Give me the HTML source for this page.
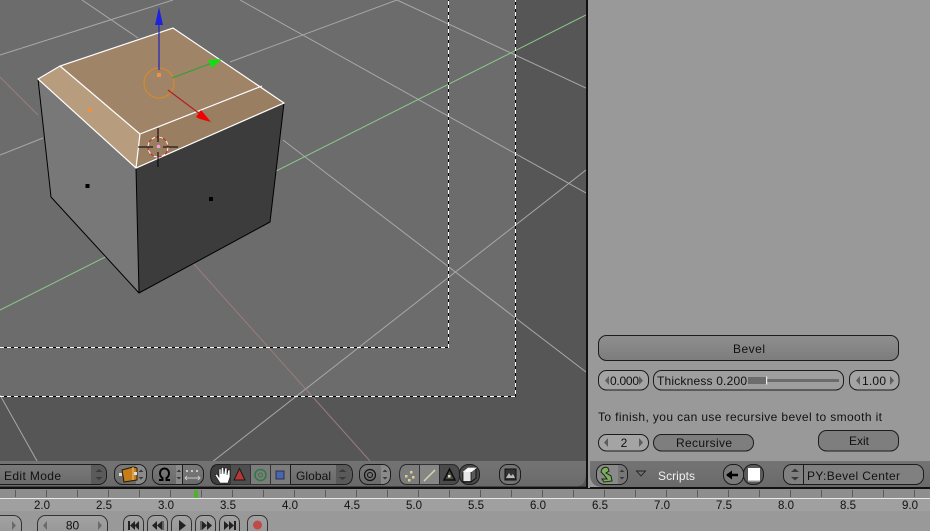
<!DOCTYPE html>
<html><head><meta charset="utf-8"><style>
html,body{margin:0;padding:0;background:#999;width:930px;height:531px;overflow:hidden}
svg{display:block;font-family:"Liberation Sans",sans-serif;font-size:11.5px;filter:blur(.35px)}
</style></head><body>
<svg width="930" height="531" viewBox="0 0 930 531" xmlns="http://www.w3.org/2000/svg">
<defs>
<linearGradient id="hd" x1="0" y1="0" x2="0" y2="1"><stop offset="0" stop-color="#747474"/><stop offset="1" stop-color="#6a6a6a"/></linearGradient>
<linearGradient id="bv" x1="0" y1="0" x2="0" y2="1"><stop offset="0" stop-color="#8f8f8f"/><stop offset="1" stop-color="#7c7c7c"/></linearGradient>
<linearGradient id="ds" x1="0" y1="0" x2="0" y2="1"><stop offset="0" stop-color="#7a7a7a"/><stop offset="1" stop-color="#6a6a6a"/></linearGradient>
<linearGradient id="lt" x1="0" y1="0" x2="0" y2="1"><stop offset="0" stop-color="#a2a2a2"/><stop offset="1" stop-color="#949494"/></linearGradient>
<clipPath id="vp"><rect x="0" y="0" width="586" height="461"/></clipPath>
</defs>
<rect width="930" height="531" fill="#999"/>
<!-- viewport -->
<rect width="587" height="488" fill="#565656"/>
<rect width="515" height="396" fill="#6c6c6c"/>
<g clip-path="url(#vp)" fill="none" stroke-width="1">
<path d="M0 55L173 0M82 0L138 38M240 0L586 193M230 62L397 0M397 0L586 88M283 140L586 372M586 170L175 491M0 155L43 138M0 395L37 461" stroke="#a8a8a8"/>
<path d="M0 77L38 115M193 263L370 461" stroke="#9a7c7c"/>
<path d="M0 310L586 15" stroke="#8cc88c"/>
</g>
<!-- camera frames -->
<g fill="none" stroke-width="1">
<path d="M0 347.500H448.500V0M0 396.500H515.500V0" stroke="#000"/>
<path d="M0 347.500H448.500V0M0 396.500H515.500V0" stroke="#fff" stroke-dasharray="4 3"/>
</g>
<!-- cube -->
<polygon points="38,79 136,168 139,293 51,197" fill="#787878"/>
<polygon points="136,168 284,103 270,222 139,293" fill="#3c3c3c"/>
<polygon points="38,79 60,66 140,134 136,168" fill="#b89c7e"/>
<polygon points="60,66 173,28 262,87 140,134" fill="#a08468"/>
<polygon points="140,134 262,87 284,103 136,168" fill="#9a7e62"/>
<path d="M38 79L51 197L139 293L270 222L284 103M136 168L139 293" fill="none" stroke="#000" stroke-width="1"/>
<path d="M38 79L60 66L173 28L284 103L136 168Z M60 66L140 134L136 168M140 134L262 86" fill="none" stroke="#fff" stroke-width="1.200"/>
<rect x="85.500" y="184" width="4" height="4" fill="#000"/>
<rect x="209" y="197" width="4" height="4" fill="#000"/>
<rect x="88" y="108" width="4" height="4" fill="#f09040"/>
<rect x="157" y="73" width="4" height="4" fill="#f09040"/>
<!-- gizmo -->
<circle cx="159" cy="83" r="15" fill="none" stroke="#e08a20" stroke-width="1"/>
<path d="M159 70V22" stroke="#2222c0" stroke-width="1.200"/>
<polygon points="159,7 155,25 163,25" fill="#2020e0"/>
<path d="M172 78L212 63" stroke="#30a030" stroke-width="1.200"/>
<polygon points="222,59 208,60 212,68" fill="#10e010"/>
<path d="M168 90L200 114" stroke="#b02020" stroke-width="1.200"/>
<polygon points="211,122 201,110 196,117 200,119" fill="#f00000"/>
<!-- 3d cursor -->
<circle cx="158" cy="147" r="10" fill="none" stroke="#d02020" stroke-width="1"/>
<circle cx="158" cy="147" r="10" fill="none" stroke="#fff" stroke-width="1" stroke-dasharray="4 4"/>
<path d="M158 128V142M158 152V167M138 147H153M163 147H178" stroke="#000" stroke-width="1"/>
<circle cx="158.500" cy="146.500" r="1.800" fill="#e8a0d8"/>

<!-- right panel -->
<rect x="586" y="0" width="344" height="488" fill="#999"/>
<rect x="586" y="0" width="2" height="488" fill="#111"/>

<!-- viewport header -->
<path d="M0 461H586V474Q586 487 573 487H0Z" fill="url(#hd)"/>
<path d="M0 487H586" stroke="#222" stroke-width="1"/>
<rect x="0" y="487" width="930" height="2" fill="#111"/>
<!-- right header -->
<path d="M590 461H930V487H603Q590 487 590 474Z" fill="url(#hd)"/>
<rect x="588" y="461" width="2" height="27" fill="#999"/>

<!-- ruler -->
<rect x="0" y="489" width="930" height="9" fill="#8e8e8e"/>
<rect x="0" y="498" width="930" height="1" fill="#e8e8e8"/>
<rect x="0" y="499" width="930" height="12" fill="#a0a0a0"/>
<path d="M15.500 490V497M46.500 490V497M77.500 490V497M108.500 490V497M139.500 490V497M170.500 490V497M201.500 490V497M232.500 490V497M263.500 490V497M294.500 490V497M325.500 490V497M356.500 490V497M387.500 490V497M418.500 490V497M449.500 490V497M480.500 490V497M511.500 490V497M542.500 490V497M573.500 490V497M604.500 490V497M635.500 490V497M666.500 490V497M697.500 490V497M728.500 490V497M759.500 490V497M790.500 490V497M821.500 490V497M852.500 490V497M883.500 490V497M914.500 490V497" stroke="#5a5a5a" stroke-width="1"/>
<rect x="194" y="490" width="4" height="8" fill="#52b030"/>
<g fill="#111" text-anchor="middle" font-size="11.500">
<text x="42" y="509">2.0</text><text x="104" y="509">2.5</text><text x="166" y="509">3.0</text><text x="228" y="509">3.5</text><text x="290" y="509">4.0</text><text x="352" y="509">4.5</text><text x="414" y="509">5.0</text><text x="476" y="509">5.5</text><text x="538" y="509">6.0</text><text x="600" y="509">6.5</text><text x="662" y="509">7.0</text><text x="724" y="509">7.5</text><text x="786" y="509">8.0</text><text x="848" y="509">8.5</text><text x="910" y="509">9.0</text>
</g>

<!-- header widgets -->
<g stroke="#1c1c1c" stroke-width="1">
<rect x="-10.500" y="464.500" width="117" height="20" rx="8" fill="url(#ds)"/>
<path d="M91 465H98Q106 465 106 474.500Q106 484 98 484H91Z" fill="#5a5a5a" stroke="none"/>
<rect x="114.500" y="464.500" width="32" height="20" rx="8" fill="url(#ds)"/>
<path d="M136 465H138Q146 465 146 474.500Q146 484 138 484H136Z" fill="#8a8a8a" stroke="none"/>
<rect x="152.500" y="464.500" width="51" height="20" rx="8" fill="url(#ds)"/>
<rect x="176" y="465" width="6" height="19" fill="#8a8a8a" stroke="none"/>
<path d="M182.500 465V484" fill="none"/>
<path d="M218 464.500H230.500V484.500H218Q210.500 484.500 210.500 474.500Q210.500 464.500 218 464.500Z" fill="#3e3e3e"/>
<rect x="230.500" y="464.500" width="20" height="20" fill="#4e4e4e" stroke="#333"/>
<rect x="250.500" y="464.500" width="20" height="20" fill="#7c7c7c" stroke="#333"/>
<rect x="270.500" y="464.500" width="20" height="20" fill="#7c7c7c" stroke="#333"/>
<path d="M290.500 464.500H344Q352.500 464.500 352.500 474.500Q352.500 484.500 344 484.500H290.500Z" fill="url(#ds)"/>
<path d="M336 465H344Q352 465 352 474.500Q352 484 344 484H336Z" fill="#5a5a5a" stroke="none"/>
<rect x="359.500" y="464.500" width="31" height="20" rx="8" fill="url(#ds)"/>
<path d="M381 465H382Q390 465 390 474.500Q390 484 382 484H381Z" fill="#8a8a8a" stroke="none"/>
<path d="M407 464.500H419.500V484.500H407Q399.500 484.500 399.500 474.500Q399.500 464.500 407 464.500Z" fill="#7c7c7c" stroke="#2a2a2a"/>
<rect x="419.500" y="464.500" width="20" height="20" fill="#868686" stroke="#333"/>
<path d="M439.500 464.500H452Q459.500 464.500 459.500 474.500Q459.500 484.500 452 484.500H439.500Z" fill="#4a4a4a" stroke="#2a2a2a"/>
<rect x="459.500" y="464.500" width="20" height="20" rx="9" fill="#484848"/>
<rect x="499.500" y="464.500" width="21" height="20" rx="8" fill="#747474"/>
<!-- right -->
<rect x="596.500" y="464.500" width="31" height="20" rx="8" fill="#8a8a8a"/>
<path d="M618 465H619Q627 465 627 474.500Q627 484 619 484H618Z" fill="#777" stroke="none"/>
<rect x="723.500" y="464.500" width="20" height="20" rx="9" fill="#7a7a7a"/>
<rect x="743.500" y="464.500" width="20" height="20" rx="9" fill="#5a5a5a"/>
<rect x="783.500" y="464.500" width="140" height="20" rx="8" fill="#808080"/>
<path d="M803.500 465V484" fill="none"/>
</g>
<text x="4" y="480" fill="#111" font-size="12" textLength="57" lengthAdjust="spacing">Edit Mode</text>
<text x="296" y="480" fill="#111" font-size="12" textLength="35" lengthAdjust="spacing">Global</text>
<text x="658" y="480" fill="#f0f0f0" font-size="12" textLength="37" lengthAdjust="spacing">Scripts</text>
<text x="807" y="480" fill="#111" font-size="12" textLength="93" lengthAdjust="spacing">PY:Bevel Center</text>
<!-- stepper arrows -->
<g fill="#3a3a3a">
<path d="M95.500 472L99 469L102.500 472ZM95.500 477L99 480L102.500 477Z"/>
<path d="M338.500 472L342.500 469L346.500 472ZM338.500 477L342.500 480L346.500 477Z"/>
<path d="M138.500 472L141 469.500L143.500 472ZM138.500 477L141 479.500L143.500 477Z"/>
<path d="M176.500 472L179 469.500L181 472ZM176.500 477L179 479.500L181 477Z"/>
<path d="M382.500 472L385 469.500L387.500 472ZM382.500 477L385 479.500L387.500 477Z"/>
<path d="M619.500 472L622 469.500L624.500 472ZM619.500 477L622 479.500L624.500 477Z"/>
<path d="M791 472L795 468.500L799 472ZM791 477L795 480.500L799 477Z"/>
</g>
<!-- object icon -->
<path d="M122 470L133 467L137 468V480L124 482Z" fill="#c67c18" stroke="#221a08" stroke-width="1"/>
<path d="M133 467V480" stroke="#e8c890" stroke-width="1"/>
<rect x="119" y="473" width="3" height="3" fill="#ddd"/><rect x="134" y="472" width="3" height="3" fill="#ddd"/>
<!-- omega -->
<path d="M159 480H162.500V478C158.500 475.500 159.500 468.500 164.500 468.500C169.500 468.500 170.500 475.500 166.500 478V480H170" fill="none" stroke="#000" stroke-width="2"/>
<!-- snap -->
<g fill="#c8c8c8"><rect x="186" y="470" width="2" height="2"/><rect x="191" y="470" width="2" height="2"/><rect x="196" y="470" width="2" height="2"/></g>
<path d="M185 478H200M187 476L185 478L187 480M198 476L200 478L198 480" fill="none" stroke="#c8c8c8" stroke-width="1"/>
<!-- hand -->
<path d="M215 475L217 474L219 477V469H221V474L221.500 467.500H223.500L224 474L225 468H227L227 475L228 470H230V477L228 483H220Z" fill="#fff" stroke="#111" stroke-width=".6"/>
<polygon points="239.500,468.500 245,480 234,480" fill="#b83838" stroke="#1a1a1a"/>
<circle cx="260.500" cy="475" r="5.500" fill="none" stroke="#2f7a44" stroke-width="1.600"/><circle cx="260.500" cy="475" r="2" fill="none" stroke="#2f7a44"/>
<rect x="276" y="471" width="8" height="8" fill="#4a66b0" stroke="#223" stroke-width=".8"/>
<!-- pivot -->
<circle cx="370" cy="475" r="5.500" fill="none" stroke="#111" stroke-width="1.200"/><circle cx="370" cy="475" r="2.500" fill="none" stroke="#111"/>
<!-- selection modes -->
<g fill="#d8d090"><rect x="405" y="475" width="2.500" height="2.500"/><rect x="410" y="471" width="2.500" height="2.500"/><rect x="412" y="476" width="2.500" height="2.500"/><rect x="408" y="479" width="2.500" height="2.500"/></g>
<path d="M424 481L435 470" stroke="#d8d8a8" stroke-width="1.500"/>
<polygon points="449.500,469 455,480 444,480" fill="none" stroke="#0c0c0c" stroke-width="1.500"/><rect x="448" y="475" width="2.500" height="2.500" fill="#e8e0a0"/>
<path d="M463 472L468 468H476V478L471 482H463Z" fill="#5a5a5a" stroke="#111"/><path d="M463 472L468 468H476L471 472Z" fill="#fff" stroke="#eee" stroke-width=".7"/><path d="M463 472V481.500H471V472" fill="#e8e8e8" stroke="#111" stroke-width=".8"/>
<!-- image -->
<rect x="505" y="469" width="11" height="11" fill="#333" stroke="#111"/><path d="M506 478L509 473L511 476L513 474L515 478Z" fill="#bbb"/>
<!-- snake -->
<path d="M602 469Q605 466 608 468L609 471L606 473L611 476L612 481L604 482L602 479L607 479L604 475L601 472Z" fill="#7fae5c" stroke="#1a2a10" stroke-width="1"/>
<polygon points="636.500,471 645.500,471 641,476" fill="none" stroke="#222" stroke-width=".9"/>
<path d="M727 475H738" stroke="#000" stroke-width="2.500"/><polygon points="726,475 732,470.500 732,479.500" fill="#000"/>
<rect x="748" y="468" width="12" height="12" fill="#fff"/><rect x="748" y="480" width="12" height="1.500" fill="#ccc"/>

<!-- bottom buttons -->
<g stroke="#333" stroke-width="1">
<rect x="-10.500" y="515.500" width="32" height="24" rx="8" fill="url(#lt)"/>
<rect x="37.500" y="515.500" width="70" height="24" rx="8" fill="url(#lt)"/>
<rect x="123.500" y="515.500" width="20" height="24" rx="7" fill="url(#lt)"/>
<rect x="147.500" y="515.500" width="20" height="24" rx="7" fill="url(#lt)"/>
<rect x="171.500" y="515.500" width="20" height="24" rx="7" fill="url(#lt)"/>
<rect x="195.500" y="515.500" width="20" height="24" rx="7" fill="url(#lt)"/>
<rect x="219.500" y="515.500" width="20" height="24" rx="7" fill="url(#lt)"/>
<rect x="247.500" y="515.500" width="20" height="24" rx="7" fill="url(#lt)"/>
</g>
<text x="72.500" y="529.500" fill="#111" text-anchor="middle" font-size="12">80</text>
<g fill="#6a6a6a"><path d="M47 521V530L43 525.500ZM98 521V530L102 525.500ZM12 521V530L16 525.500Z"/></g>
<g fill="#222">
<path d="M128 521H130V530H128ZM135 521V530L130 525.500ZM139 521V530L134.500 525.500Z"/>
<path d="M157 521V530L152 525.500ZM162 521V530L157 525.500ZM162.500 521H163.500V530H162.500Z"/>
<path d="M179 520V531L186 525.500Z"/>
<path d="M200.500 521H201.500V530H200.500ZM202 521V530L207 525.500ZM207 521V530L212 525.500Z"/>
<path d="M224 521V530L229 525.500ZM229 521V530L234 525.500ZM234 521H236V530H234Z"/>
</g>
<circle cx="257.500" cy="525" r="4.500" fill="#c04a4a"/>

<!-- panel widgets -->
<g stroke="#1c1c1c" stroke-width="1">
<rect x="598.500" y="335.500" width="300" height="25" rx="8" fill="url(#bv)"/>
<rect x="598.500" y="370.500" width="50" height="19.500" rx="8" fill="#a4a4a4"/>
<rect x="653.500" y="370.500" width="190" height="19.500" rx="8" fill="#9e9e9e"/>
<rect x="849.500" y="370.500" width="49.500" height="19.500" rx="8" fill="#a4a4a4"/>
<rect x="598.500" y="434.500" width="50" height="16.500" rx="8" fill="#a4a4a4"/>
<rect x="653.500" y="434.500" width="100" height="16.500" rx="8" fill="#7e7e7e"/>
<rect x="818.500" y="430.500" width="80" height="20.500" rx="8" fill="#7e7e7e"/>
</g>
<rect x="748" y="377" width="18" height="7" fill="#6c6c6c"/>
<rect x="767" y="379" width="72" height="3" fill="#6c6c6c"/>
<rect x="766" y="376.500" width="1.200" height="8" fill="#eee"/>
<g fill="#5e5e5e">
<path d="M609 376V385L605 380.500ZM639 376V385L643 380.500ZM860 376V385L856 380.500ZM890 376V385L894 380.500ZM608 438V447L604 442.500ZM639 438V447L643 442.500Z"/>
</g>
<g fill="#111">
<text x="733" y="353" font-size="12" textLength="32" lengthAdjust="spacing">Bevel</text>
<text x="610" y="385" font-size="12" textLength="29" lengthAdjust="spacing">0.000</text>
<text x="657" y="385" font-size="12" textLength="90" lengthAdjust="spacing">Thickness 0.200</text>
<text x="862" y="385" font-size="12" textLength="24" lengthAdjust="spacing">1.00</text>
<text x="598" y="421" font-size="12" textLength="284" lengthAdjust="spacing">To finish, you can use recursive bevel to smooth it</text>
<text x="624" y="447" text-anchor="middle" font-size="12">2</text>
<text x="676" y="447" font-size="12" textLength="56" lengthAdjust="spacing">Recursive</text>
<text x="849" y="445" font-size="12" textLength="20" lengthAdjust="spacing">Exit</text>
</g>
</svg>
</body></html>
